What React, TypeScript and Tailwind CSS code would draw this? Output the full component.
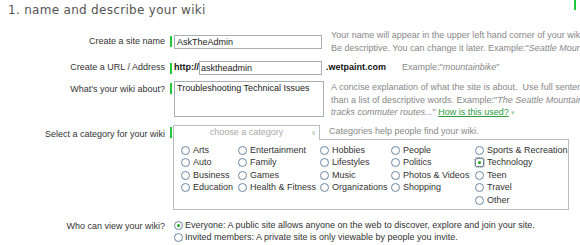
import React from 'react';

function Radio({ checked = false, focus = false }: { checked?: boolean; focus?: boolean }) {
    return (
        <span
            className={`inline-flex shrink-0 items-center justify-center w-[9px] h-[9px] border border-[#6b86a3] bg-white ${focus ? 'rounded-[2px] outline outline-1 outline-dotted outline-[#999]' : 'rounded-full'}`}
        >
            {checked && <span className="w-[3px] h-[3px] rounded-full bg-[#1fa31f]" />}
        </span>
    );
}

const columns: { w: string; items: string[] }[] = [
    { w: 'w-[57px]', items: ['Arts', 'Auto', 'Business', 'Education'] },
    { w: 'w-[82px]', items: ['Entertainment', 'Family', 'Games', 'Health & Fitness'] },
    { w: 'w-[71px]', items: ['Hobbies', 'Lifestyles', 'Music', 'Organizations'] },
    { w: 'w-[84px]', items: ['People', 'Politics', 'Photos & Videos', 'Shopping'] },
    { w: 'w-[90px]', items: ['Sports & Recreation', 'Technology', 'Teen', 'Travel', 'Other'] },
];

function GreenBar() {
    return <div className="ml-[5px] mr-[2px] w-[2px] h-[11px] bg-[#22c93a] shrink-0" />;
}

export default function App() {
    return (
        <div className="relative w-[580px] h-[245px] overflow-hidden bg-white font-['Liberation_Sans',Arial,sans-serif] text-[9px] text-[#333]">
            {/* corner marker */}
            <div className="absolute right-[4px] top-0 w-[2px] h-[10px] bg-[#22c93a]" />

            <h1 className="h-[28px] pl-[8px] pt-[2px] font-['DejaVu_Sans',Verdana,sans-serif] text-[12px] leading-[16px] text-[#555] tracking-[0.3px]">
                1. name and describe your wiki
            </h1>

            {/* site name */}
            <div className="flex items-center h-[27px]">
                <div className="w-[165px] shrink-0 text-right">Create a site name</div>
                <GreenBar />
                <input
                    defaultValue="AskTheAdmin"
                    className="w-[148px] shrink-0 h-[14px] border border-[#a8afb6] px-[2px] text-[9px] text-[#222] outline-none"
                />
                <div className="ml-[9px] shrink-0 leading-[13px] text-[#888] whitespace-nowrap">
                    <div>Your name will appear in the upper left hand corner of your wiki.</div>
                    <div>
                        Be descriptive. You can change it later. Example:"<i>Seattle Mountain Bikers</i>"
                    </div>
                </div>
            </div>

            {/* url */}
            <div className="flex items-center h-[26px]">
                <div className="w-[165px] shrink-0 text-right">Create a URL / Address</div>
                <GreenBar />
                <b className="shrink-0 text-[#111]">http://</b>
                <input
                    defaultValue="asktheadmin"
                    className="w-[123px] shrink-0 h-[14px] border border-[#a8afb6] px-[1px] text-[9px] text-[#222] outline-none"
                />
                <b className="ml-[4px] shrink-0 text-[#111]">.wetpaint.com</b>
                <span className="ml-[16px] shrink-0 text-[#888]">
                    Example:"<i>mountainbike</i>"
                </span>
            </div>

            {/* about */}
            <div className="flex items-start h-[44px]">
                <div className="w-[165px] shrink-0 text-right pt-[2px]">What's your wiki about?</div>
                <div className="pt-[2px] flex shrink-0">
                    <GreenBar />
                </div>
                <textarea
                    defaultValue="Troubleshooting Technical Issues"
                    className="w-[150px] shrink-0 h-[36px] border border-[#a8afb6] px-[2px] py-[1px] text-[9px] leading-[11px] text-[#222] outline-none resize-none"
                />
                <div className="ml-[7px] shrink-0 leading-[12.5px] text-[#888] whitespace-nowrap">
                    <div>A concise explanation of what the site is about. &nbsp;Use full sentences rather</div>
                    <div>
                        than a list of descriptive words. Example:"<i>The Seattle Mountain Bikers wiki</i>
                    </div>
                    <div>
                        <i>tracks commuter routes...</i>"{' '}
                        <span className="text-[#2f9a3e] underline">How is this used?</span>
                        <span className="ml-[2px] text-[7px] text-[#9bd49b]">▾</span>
                    </div>
                </div>
            </div>

            {/* category */}
            <div className="flex items-start">
                <div className="w-[165px] shrink-0 text-right pt-[3px]">Select a category for your wiki</div>
                <div className="pt-[2px] flex shrink-0">
                    <GreenBar />
                </div>
                <div className="-ml-[1px] flex flex-col shrink-0">
                    <div className="flex h-[15px]">
                        <div className="relative w-[147px] border-l border-t border-r border-[#bbb] text-center text-[#aaa] leading-[13px]">
                            choose a category
                            <span className="absolute right-[3px] top-0 text-[7px] text-[#9bbf9b]">∨</span>
                        </div>
                        <div className="w-[249px] border-b border-[#bbb] pl-[9px] text-[#888] leading-[13px]">
                            Categories help people find your wiki.
                        </div>
                    </div>
                    <div className="w-[396px] h-[70px] border-l border-r border-b border-[#bbb] pl-[7px] pt-[4px] flex">
                        {columns.map((col) => (
                            <div key={col.items[0]} className={`${col.w} shrink-0 flex flex-col`}>
                                {col.items.map((it) => (
                                    <div key={it} className="flex items-center h-[12.5px] whitespace-nowrap">
                                        <Radio checked={it === 'Technology'} focus={it === 'Technology'} />
                                        <span className="ml-[3px]">{it}</span>
                                    </div>
                                ))}
                            </div>
                        ))}
                    </div>
                </div>
            </div>

            {/* visibility */}
            <div className="flex items-start mt-[9px]">
                <div className="w-[165px] shrink-0 text-right pt-[1px]">Who can view your wiki?</div>
                <div className="ml-[9px] flex flex-col shrink-0">
                    <div className="flex items-center h-[12.5px]">
                        <Radio checked />
                        <span className="ml-[2px]">
                            Everyone: A public site allows anyone on the web to discover, explore and join your site.
                        </span>
                    </div>
                    <div className="flex items-center h-[12.5px]">
                        <Radio />
                        <span className="ml-[2px]">
                            Invited members: A private site is only viewable by people you invite.
                        </span>
                    </div>
                </div>
            </div>
        </div>
    );
}
